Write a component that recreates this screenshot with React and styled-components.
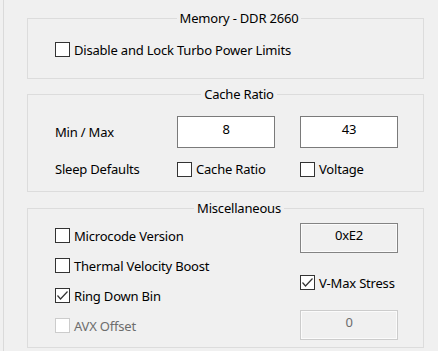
import React from "react";
import styled, { createGlobalStyle } from "styled-components";

const GlobalStyle = createGlobalStyle`
  html, body {
    margin: 0;
    padding: 0;
    background: #f0f0f0;
  }
  body {
    font-family: "Noto Sans", "Open Sans", sans-serif;
    font-size: 13px;
    letter-spacing: -0.2px;
    color: #000;
  }
  * {
    box-sizing: border-box;
  }
`;

const Frame = styled.div`
  height: 351px;
  margin-left: 3px;
  border-left: 1px solid #dadada;
  padding: 10px 14px 0 23px;
  display: flex;
  flex-direction: column;
`;

const Group = styled.fieldset`
  margin: ${({ $gap }) => $gap || 0}px 0 0 0;
  padding: ${({ $pad }) => $pad};
  border: 1px solid #dcdcdc;
  min-width: 0;
`;

const Legend = styled.legend`
  margin: 0 auto;
  padding: 0 3px;
  line-height: 16px;
  height: 16px;
`;

const Grid = styled.div`
  display: grid;
  grid-template-columns: ${({ $cols }) => $cols};
  row-gap: ${({ $rowGap }) => $rowGap || 0}px;
  align-items: ${({ $align }) => $align || "center"};
`;

const Column = styled.div`
  display: flex;
  flex-direction: column;
  padding-top: ${({ $top }) => $top || 0}px;
`;

const Label = styled.span`
  line-height: 16px;
`;

const CheckRow = styled.label`
  display: flex;
  align-items: center;
  height: 15px;
  gap: 4px;
  margin-bottom: ${({ $after }) => $after || 0}px;
  color: ${({ $disabled }) => ($disabled ? "#6d6d6d" : "#000")};
  white-space: nowrap;
`;

const Box = styled.span`
  width: 15px;
  height: 15px;
  flex: none;
  background: #fff;
  border: 1px solid ${({ $disabled }) => ($disabled ? "#cccccc" : "#333333")};
  display: flex;
  align-items: center;
  justify-content: center;
`;

const Field = styled.div`
  width: 98px;
  height: ${({ $h }) => $h || 32}px;
  margin-bottom: ${({ $after }) => $after || 0}px;
  padding-top: ${({ $h }) => ($h === 30 ? 3 : 4)}px;
  text-align: center;
  line-height: 16px;
  background: ${({ $variant }) => ($variant === "edit" ? "#fff" : "#f0f0f0")};
  border: 1px solid
    ${({ $variant }) =>
      $variant === "disabled" ? "#cccccc" : $variant === "edit" ? "#7a7a7a" : "#838383"};
  box-shadow: ${({ $variant }) =>
    $variant === "edit" ? "none" : "inset 0 0 0 1px #fbfbfb"};
  color: ${({ $variant }) => ($variant === "disabled" ? "#6d6d6d" : "#000")};
`;

function Check({ children, checked, disabled, after }) {
  return (
    <CheckRow $disabled={disabled} $after={after}>
      <Box $disabled={disabled}>
        {checked && (
          <svg width="13" height="13" viewBox="0 0 13 13">
            <polyline
              points="1.5,6.5 4.5,10 11.5,2.5"
              fill="none"
              stroke="#333"
              strokeWidth="1.2"
            />
          </svg>
        )}
      </Box>
      {children}
    </CheckRow>
  );
}

export default function App() {
  return (
    <>
      <GlobalStyle />
      <Frame>
        <Group $pad="16px 0 21px 27px">
          <Legend>Memory - DDR 2660</Legend>
          <Check>Disable and Lock Turbo Power Limits</Check>
        </Group>

        <Group $gap={7} $pad="14px 0 14px 27px">
          <Legend>Cache Ratio</Legend>
          <Grid $cols="122px 123px 98px" $rowGap={13}>
            <Label>Min / Max</Label>
            <Field $variant="edit">8</Field>
            <Field $variant="edit">43</Field>
            <Label>Sleep Defaults</Label>
            <Check>Cache Ratio</Check>
            <Check>Voltage</Check>
          </Grid>
        </Group>

        <Group $gap={8} $pad="0 0 7px 27px">
          <Legend>Miscellaneous</Legend>
          <Grid $cols="245px 98px" $align="start">
            <Column $top={12}>
              <Check after={15}>Microcode Version</Check>
              <Check after={15}>Thermal Velocity Boost</Check>
              <Check checked after={15}>
                Ring Down Bin
              </Check>
              <Check disabled>AVX Offset</Check>
            </Column>
            <Column $top={7}>
              <Field $h={30} $after={22}>
                0xE2
              </Field>
              <Check checked after={20}>
                V-Max Stress
              </Check>
              <Field $h={30} $variant="disabled">
                0
              </Field>
            </Column>
          </Grid>
        </Group>
      </Frame>
    </>
  );
}
